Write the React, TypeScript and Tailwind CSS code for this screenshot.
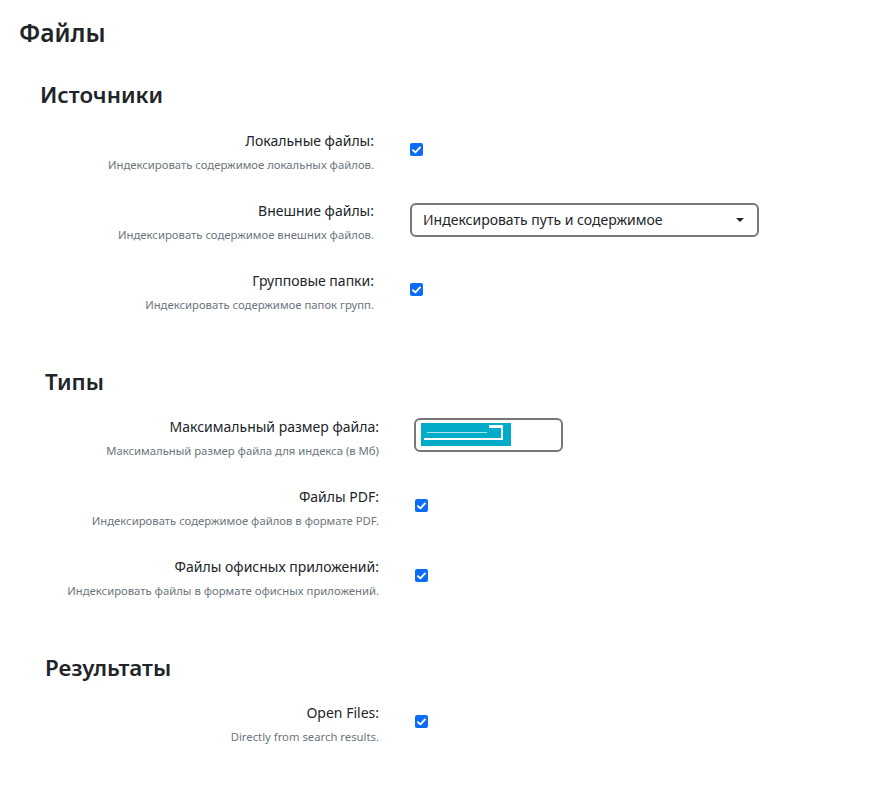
import React from "react";

const Check = () => (
  <div className="flex h-[13px] w-[13px] items-center justify-center rounded-[2px] bg-[#0b6cf7]">
    <svg width="9" height="8" viewBox="0 0 9 8">
      <path d="M1 4.2 L3.4 6.4 L8 1.4" fill="none" stroke="#fff" strokeWidth="1.9" strokeLinecap="round" strokeLinejoin="round" />
    </svg>
  </div>
);

const Row = ({ label, desc, children }: { label: string; desc: string; children: React.ReactNode }) => (
  <div className="flex items-center">
    <div className="w-[334px] text-right">
      <div className="text-[14px] leading-[21px] text-[#212529]">{label}</div>
      <div className="mt-[6px] text-[11.3px] leading-[16px] text-[#6c757d]">{desc}</div>
    </div>
    <div className="ml-[36px] -mt-[4px]">{children}</div>
  </div>
);

export default function App() {
  return (
    <div className="min-h-[792px] bg-white pl-[19px] pt-[17px]" style={{ fontFamily: '"Noto Sans", "Open Sans", sans-serif' }}>
      <h1 className="text-[24.5px] font-semibold leading-[32px] text-[#212529]">Файлы</h1>

      <section className="mt-[31px] pl-[21px]">
        <h2 className="text-[22.3px] font-semibold leading-[30px] text-[#212529]">Источники</h2>
        <div className="mt-[20px] flex flex-col gap-[27px]">
          <Row label="Локальные файлы:" desc="Индексировать содержимое локальных файлов.">
            <Check />
          </Row>
          <Row label="Внешние файлы:" desc="Индексировать содержимое внешних файлов.">
            <div className="flex h-[34px] w-[349px] items-center justify-between rounded-[6px] border-2 border-[#777] pl-[11px] pr-[13px] text-[14px] text-[#212529]">
              <span>Индексировать путь и содержимое</span>
              <svg width="8" height="4" viewBox="0 0 8 4">
                <path d="M0 0 L8 0 L4 4 Z" fill="#222" />
              </svg>
            </div>
          </Row>
          <Row label="Групповые папки:" desc="Индексировать содержимое папок групп.">
            <Check />
          </Row>
        </div>
      </section>

      <section className="mt-[54px] pl-[26px]">
        <h2 className="text-[22.3px] font-semibold leading-[30px] text-[#212529]">Типы</h2>
        <div className="mt-[19px] flex flex-col gap-[27px]">
          <Row label="Максимальный размер файла:" desc="Максимальный размер файла для индекса (в Мб)">
            <div className="-ml-[1px] -mt-[2px] flex h-[34px] w-[149px] items-center rounded-[6px] border-2 border-[#777] pl-[5px]">
              <div className="relative h-[23px] w-[90px] bg-[#00acc8]">
                <div className="absolute left-[6px] top-[9px] h-[1px] w-[60px] bg-[#9fe3ee]" />
                <div className="absolute left-[3px] top-[15px] h-[2px] w-[79px] bg-white" />
                <div className="absolute left-[80px] top-[5px] h-[11px] w-[2px] bg-white" />
                <div className="absolute left-[68px] top-[2px] h-[3px] w-[14px] bg-white" />
              </div>
            </div>
          </Row>
          <Row label="Файлы PDF:" desc="Индексировать содержимое файлов в формате PDF.">
            <Check />
          </Row>
          <Row label="Файлы офисных приложений:" desc="Индексировать файлы в формате офисных приложений.">
            <Check />
          </Row>
        </div>
      </section>

      <section className="mt-[54px] pl-[26px]">
        <h2 className="text-[22.3px] font-semibold leading-[30px] text-[#212529]">Результаты</h2>
        <div className="mt-[19px] flex flex-col gap-[27px]">
          <Row label="Open Files:" desc="Directly from search results.">
            <Check />
          </Row>
        </div>
      </section>
    </div>
  );
}
